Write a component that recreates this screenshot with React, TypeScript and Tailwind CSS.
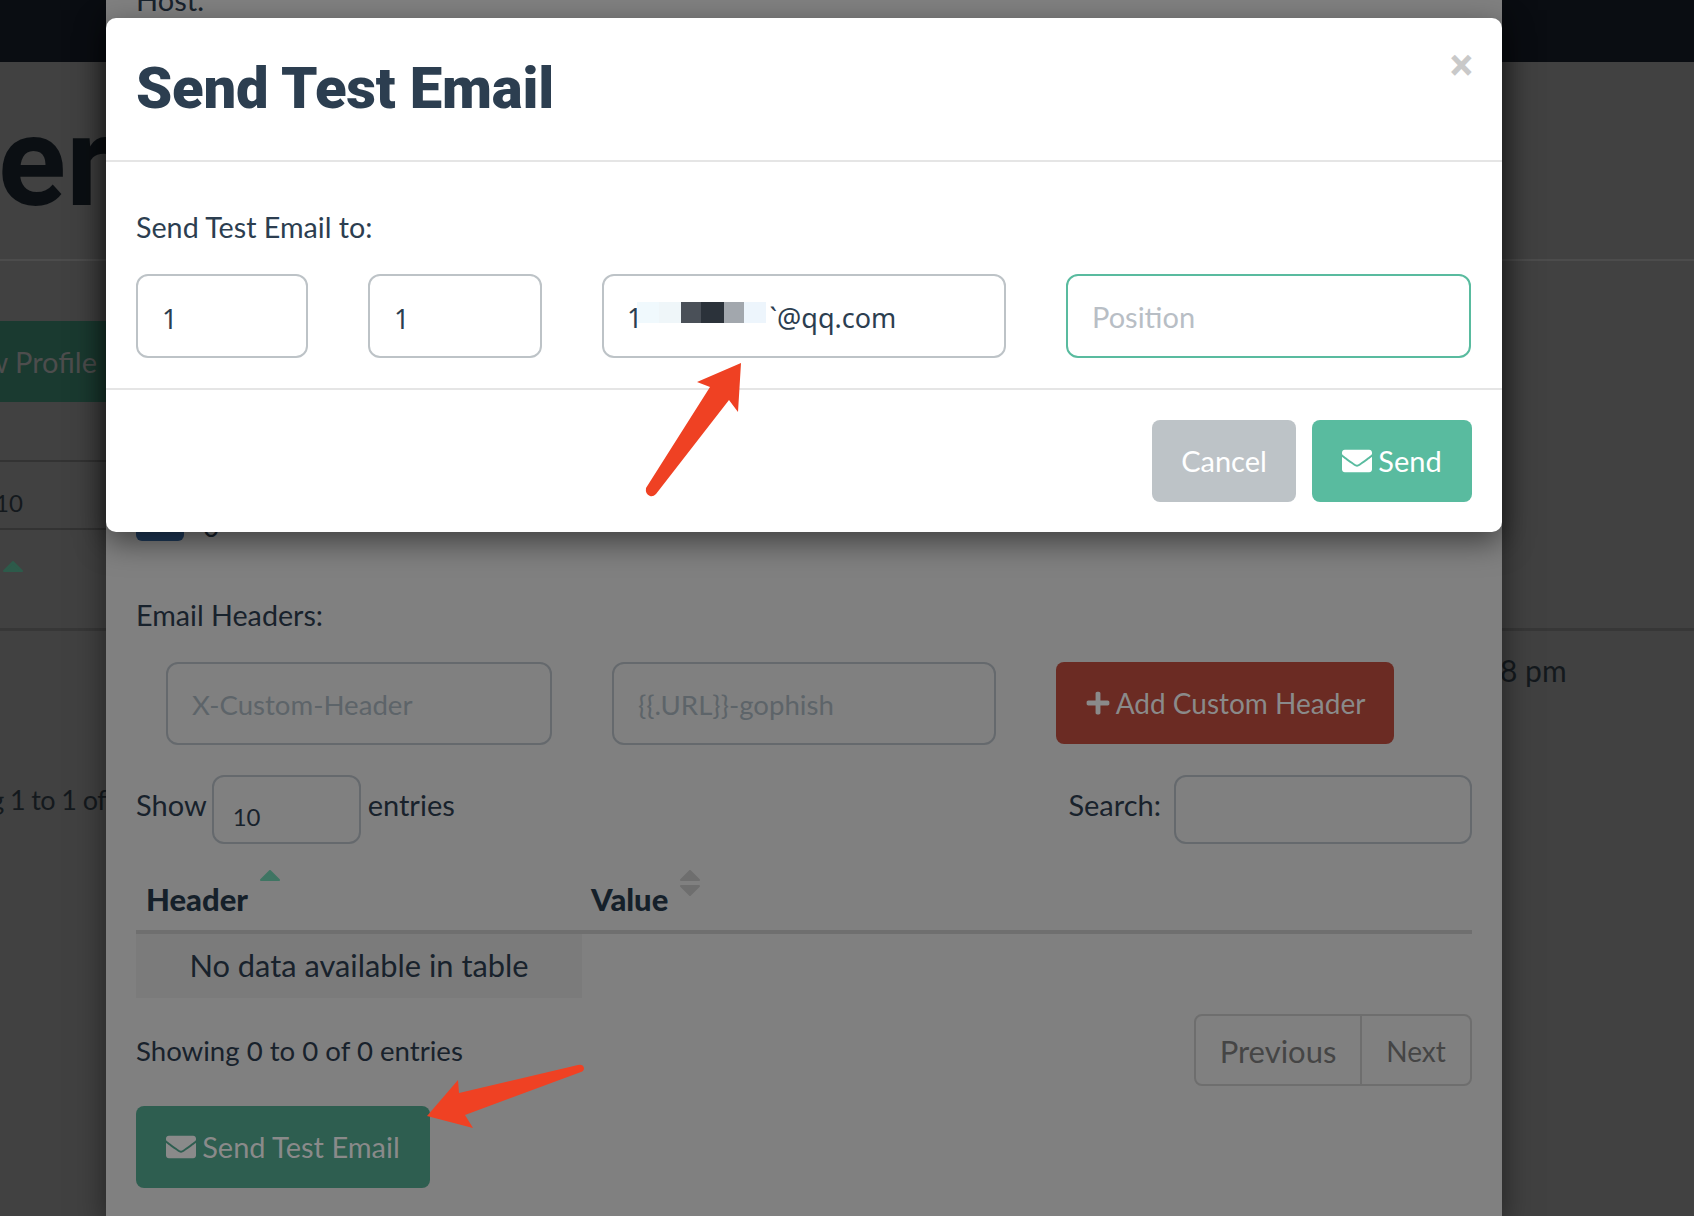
import { FaEnvelope, FaPlus } from "react-icons/fa";

const body = "font-['Lato','Noto_Sans',sans-serif]";

function SortUp({ color }: { color: string }) {
	return (
		<svg width="20" height="11" viewBox="0 0 20 11" className="block">
			<path d="M10 1 L19 10 H1 Z" fill={color} stroke={color} strokeWidth="2" strokeLinejoin="round" />
		</svg>
	);
}

function SortDown({ color }: { color: string }) {
	return (
		<svg width="20" height="11" viewBox="0 0 20 11" className="block">
			<path d="M1 1 H19 L10 10 Z" fill={color} stroke={color} strokeWidth="2" strokeLinejoin="round" />
		</svg>
	);
}

function LeftStrip() {
	return (
		<div className="w-[106px] shrink-0 overflow-hidden flex flex-col">
			<div className="h-[62px] bg-[#0a0d12]" />
			<div className="h-[199px] border-b-2 border-[#4c4c4c] overflow-hidden">
				<p className="mt-[25px] -ml-[2px] text-[126px] leading-[150px] font-bold font-['Roboto',sans-serif] text-[#0b0f13] whitespace-nowrap">
					er
				</p>
			</div>
			<div className="mt-[60px] h-[81px] bg-[#1a3a30] flex items-center justify-end pr-[9px] overflow-hidden">
				<span className="text-[29px] text-[#4d4d4d] whitespace-nowrap">w Profile</span>
			</div>
			<div className="mt-[58px] h-[70px] border-y-2 border-[#333333] flex items-center pt-[15px]">
				<span className="text-[24px] text-[#14191d] -ml-[5px]">10</span>
			</div>
			<div className="mt-[31px] ml-[3px]">
				<SortUp color="#2d5a4a" />
			</div>
			<div className="mt-[56px] h-[3px] bg-[#373737]" />
			<div className="mt-[149px] flex justify-end whitespace-nowrap">
				<span className="text-[27px] tracking-[-0.6px] text-[#14191d]">g 1 to 1 of</span>
			</div>
		</div>
	);
}

function RightStrip() {
	return (
		<div className="w-[192px] shrink-0 overflow-hidden flex flex-col">
			<div className="h-[62px] bg-[#0a0d12]" />
			<div className="h-[199px] border-b-2 border-[#4c4c4c]" />
			<div className="mt-[367px] h-[3px] bg-[#373737]" />
			<p className="mt-[21px] text-[30px] leading-[36px] text-[#14191d] whitespace-nowrap -ml-[2px]">8 pm</p>
		</div>
	);
}

function BackPanel() {
	return (
		<div className={`w-[1396px] shrink-0 bg-[#808080] pl-[30px] pr-[30px] text-[29px] text-[#18222c] shadow-[0_10px_30px_rgba(0,0,0,0.5)] relative z-10 ${body}`}>
			<p className="-mt-[18px] leading-[36px]">Host:</p>
			<div className="mt-[494px] flex items-end gap-[19px] h-[29px]">
				<div className="w-[48px] h-[29px] bg-[#1f3a5a] rounded-[6px]" />
				<span className="text-[28px] leading-[29px]">0</span>
			</div>
			<p className="mt-[56px] leading-[36px] text-[28.7px]">Email Headers:</p>
			<div className="mt-[29px] flex items-start text-[27.6px]">
				<div className="ml-[30px] w-[386px] h-[83px] border-2 border-[#65696d] rounded-[12px] flex items-center pl-[24px] pt-[2px] text-[#5d6469]">
					X-Custom-Header
				</div>
				<div className="ml-[60px] w-[384px] h-[83px] border-2 border-[#65696d] rounded-[12px] flex items-center pl-[24px] pt-[2px] text-[#5d6469]">
					{"{{.URL}}-gophish"}
				</div>
				<div className="ml-[60px] w-[338px] h-[82px] bg-[#6b2b23] rounded-[8px] flex items-center justify-center gap-[5px] text-[#8a8a8a] text-[28px]">
					<FaPlus className="w-[26px] h-[26px]" />
					<span>Add Custom Header</span>
				</div>
			</div>
			<div className="mt-[30px] flex items-start justify-between">
				<div className="flex items-start">
					<span className="mt-[12px] leading-[36px]">Show</span>
					<div className="ml-[5px] w-[149px] h-[69px] border-2 border-[#65696d] rounded-[12px] pl-[19px] pt-[25px] text-[24px] leading-[30px]">
						10
					</div>
					<span className="ml-[7px] mt-[12px] leading-[36px]">entries</span>
				</div>
				<div className="flex items-start">
					<span className="mt-[12px] leading-[36px]">Search:</span>
					<div className="ml-[13px] w-[298px] h-[69px] border-2 border-[#65696d] rounded-[12px]" />
				</div>
			</div>
			<div className="mt-[26px] h-[60px] border-b-4 border-[#6f6f6f] box-content flex items-start font-black text-[31px] text-[#15202a]">
				<div className="w-[444px] pl-[10px] flex items-start">
					<span className="mt-[11px] leading-[36px]">Header</span>
					<div className="ml-[12px]">
						<SortUp color="#3f7563" />
					</div>
				</div>
				<div className="pl-[11px] flex items-start">
					<span className="mt-[11px] leading-[36px]">Value</span>
					<div className="ml-[12px] flex flex-col gap-[4px]">
						<SortUp color="#6e6e6e" />
						<SortDown color="#6e6e6e" />
					</div>
				</div>
			</div>
			<div className="w-[446px] h-[64px] bg-[#7b7b7b] flex items-center justify-center text-[30.8px] pt-[1px]">
				No data available in table
			</div>
			<div className="mt-[16px] flex items-start justify-between">
				<span className="mt-[19px] leading-[36px] text-[27.6px]">Showing 0 to 0 of 0 entries</span>
				<div className="w-[278px] h-[72px] border-2 border-[#6e6e6e] rounded-[8px] flex items-center text-[#454545] text-[31px]">
					<span className="w-[166px] h-full flex items-center justify-center border-r-2 border-[#6e6e6e] pt-[2px]">Previous</span>
					<span className="flex-1 text-center text-[28px] pt-[2px]">Next</span>
				</div>
			</div>
			<div className="mt-[20px] w-[294px] h-[82px] bg-[#2e5e50] rounded-[8px] flex items-center justify-center gap-[6px] text-[#8a8a8a]">
				<FaEnvelope className="w-[30px] h-[30px]" />
				<span>Send Test Email</span>
			</div>
		</div>
	);
}

function TestEmailModal() {
	return (
		<div className={`absolute left-[106px] top-[18px] z-20 w-[1396px] h-[514px] bg-white rounded-[10px] shadow-[0_10px_30px_rgba(0,0,0,0.5)] text-[#2c3e50] flex flex-col ${body}`}>
			<div className="h-[144px] border-b-2 border-[#e5e5e5] pl-[30px] pr-[29px] flex items-start justify-between">
				<h1 className="mt-[36px] text-[58px] leading-[68px] font-black tracking-[-0.2px] font-['Roboto',sans-serif]">Send Test Email</h1>
				<span className="mt-[23px] text-[44px] leading-[48px] font-bold font-['Roboto',sans-serif] text-[#c9c9c9]">×</span>
			</div>
			<div className="h-[228px] border-b-2 border-[#e5e5e5] pl-[30px] pr-[30px]">
				<p className="mt-[47px] text-[28.7px] leading-[36px]">Send Test Email to:</p>
				<div className="mt-[29px] flex gap-[60px] font-['Noto_Sans',sans-serif] text-[27px]">
					<input readOnly value="1" className="w-[172px] h-[84px] border-2 border-[#bdc3c7] rounded-[12px] pl-[24px] pt-[4px] outline-none" />
					<input readOnly value="1" className="w-[174px] h-[84px] border-2 border-[#bdc3c7] rounded-[12px] pl-[24px] pt-[4px] outline-none" />
					<div className="relative w-[404px] h-[84px] border-2 border-[#bdc3c7] rounded-[12px] pl-[23px] pt-[4px] flex items-center">
						<span>1</span>
						<span className="ml-[127px]">`@qq.com</span>
						<div className="absolute left-[33px] top-[26px] h-[21px] flex">
							<div className="w-[22px] bg-[#f0f9fd]" />
							<div className="w-[22px] bg-[#eff6f9]" />
							<div className="w-[20px] bg-[#4a5058]" />
							<div className="w-[23px] bg-[#2b323a]" />
							<div className="w-[20px] bg-[#a2a7ad]" />
							<div className="w-[22px] bg-[#edf5fc]" />
						</div>
					</div>
					<input
						readOnly
						placeholder="Position"
						className={`w-[405px] h-[84px] border-2 border-[#59bb9f] rounded-[12px] pl-[24px] pt-[1px] outline-none placeholder:text-[#b8bec5] ${body} text-[29px]`}
					/>
				</div>
			</div>
			<div className="flex-1 pr-[30px] pt-[30px] flex justify-end gap-[16px] text-[29px] text-white">
				<div className="w-[144px] h-[82px] bg-[#bdc3c7] rounded-[8px] flex items-center justify-center">Cancel</div>
				<div className="w-[160px] h-[82px] bg-[#59bb9f] rounded-[8px] flex items-center justify-center gap-[6px]">
					<FaEnvelope className="w-[30px] h-[30px]" />
					<span>Send</span>
				</div>
			</div>
		</div>
	);
}

function Arrows() {
	return (
		<svg width="1694" height="1216" viewBox="0 0 1694 1216" className="absolute left-0 top-0 z-30 pointer-events-none">
			<path
				d="M741 363 L697 382 L710 387 L646 488 Q645 494 650 496 Q653 497 656 494 L729 400 L738 412 Z"
				fill="#ef4123"
			/>
			<path
				d="M427 1116 L458 1080 L459 1093 L578 1065 Q583 1064 584 1068 Q584 1071 581 1072 L465 1115 L473 1128 Z"
				fill="#ef4123"
			/>
		</svg>
	);
}

export default function App() {
	return (
		<div className={`relative w-[1694px] h-[1216px] overflow-hidden bg-[#414141] flex ${body}`}>
			<LeftStrip />
			<BackPanel />
			<RightStrip />
			<TestEmailModal />
			<Arrows />
		</div>
	);
}
